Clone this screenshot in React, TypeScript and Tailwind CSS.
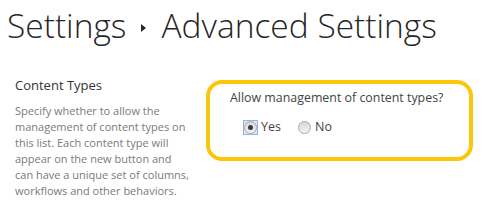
import React from "react";

function Radio({ checked, focused }: { checked?: boolean; focused?: boolean }) {
  return (
    <span
      className={
        "flex h-[15px] w-[15px] items-center justify-center " +
        (focused ? "border border-[#8fb4e8] bg-[#dbe8f8]" : "")
      }
    >
      <span className="flex h-[13px] w-[13px] items-center justify-center rounded-full border border-[#a9a9a9] bg-gradient-to-b from-[#d6d6d6] to-[#f4f4f4]">
        {checked && <span className="h-[5px] w-[5px] rounded-full bg-[#3c3c3c]" />}
      </span>
    </span>
  );
}

const lines = [
  "Specify whether to allow the",
  "management of content types on",
  "this list. Each content type will",
  "appear on the new button and",
  "can have a unique set of columns,",
  "workflows and other behaviors.",
];

export default function App() {
  return (
    <div
      className="h-[208px] w-[490px] overflow-hidden bg-white"
      style={{ fontFamily: '"Open Sans", "Segoe UI", sans-serif' }}
    >
      <div className="flex items-center pl-[7px] pt-[5px] text-[33.5px] font-light leading-[40px] text-[#262626]">
        <span>Settings</span>
        <svg width="5" height="8" viewBox="0 0 5 8" className="ml-[15px] mr-[15px] mt-[5px]">
          <path d="M0 0 L5 4 L0 8 Z" fill="#262626" />
        </svg>
        <span>Advanced Settings</span>
      </div>
      <div className="mt-[32px] flex">
        <div className="w-[201px] shrink-0 pl-[15px]">
          <div className="text-[13px] leading-[17px] text-[#333]">Content Types</div>
          <div className="mt-[9px] text-[11px] leading-[16px] text-[#7a7a7a]">
            {lines.map((l) => (
              <div key={l} className="whitespace-nowrap">
                {l}
              </div>
            ))}
          </div>
        </div>
        <div className="ml-[5px] mt-[3px] h-[81px] w-[267px] rounded-[16px] border-[4px] border-[#fcc60a] pl-[20px] pt-[5px]">
          <div className="text-[12.4px] leading-[18px] text-[#444]">Allow management of content types?</div>
          <div className="mt-[11px] flex items-center pl-[13px] text-[12.5px] leading-[18px] text-[#444]">
            <Radio checked focused />
            <span className="ml-[3px]">Yes</span>
            <span className="ml-[16px]">
              <Radio />
            </span>
            <span className="ml-[3px]">No</span>
          </div>
        </div>
      </div>
    </div>
  );
}
